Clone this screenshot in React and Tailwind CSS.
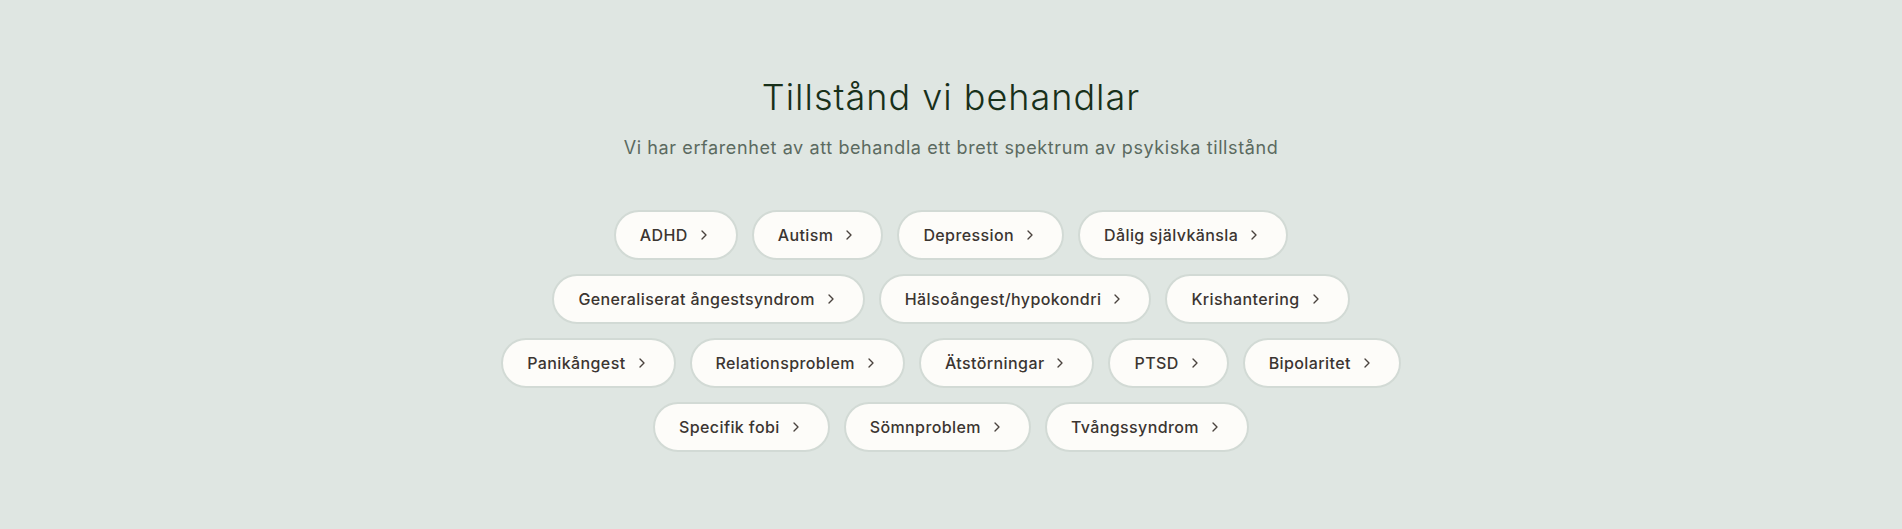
import React from 'react';
import { ChevronRight } from 'lucide-react';

const rows = [
  ['ADHD', 'Autism', 'Depression', 'Dålig självkänsla'],
  ['Generaliserat ångestsyndrom', 'Hälsoångest/hypokondri', 'Krishantering'],
  ['Panikångest', 'Relationsproblem', 'Ätstörningar', 'PTSD', 'Bipolaritet'],
  ['Specifik fobi', 'Sömnproblem', 'Tvångssyndrom'],
];

const ConditionPill = ({ label }) => (
  <button className="flex h-[50px] items-center gap-2 rounded-full border-2 border-[#d2dad5] bg-[#fdfcf9] px-6 text-base font-medium tracking-[0.4px] text-[#3b3531]">
    <span>{label}</span>
    <ChevronRight size={16} strokeWidth={2} className="text-[#4a433e]" />
  </button>
);

const App = () => {
  return (
    <section className="min-h-[529px] bg-[#dfe6e2] pt-[77px] pb-[76px] font-['Inter',sans-serif]">
      <div className="mx-auto max-w-4xl text-center">
        <h2 className="text-4xl font-light tracking-[1px] text-[#18301a]">Tillstånd vi behandlar</h2>
        <p className="mt-[17px] text-lg tracking-[0.6px] text-[#5b6a60]">
          Vi har erfarenhet av att behandla ett brett spektrum av psykiska tillstånd
        </p>
      </div>
      <div className="mt-12 flex flex-col items-center gap-y-3.5">
        {rows.map((row, i) => (
          <div key={i} className="flex justify-center gap-x-3.5">
            {row.map(label => (
              <ConditionPill key={label} label={label} />
            ))}
          </div>
        ))}
      </div>
    </section>
  );
};

export default App;
